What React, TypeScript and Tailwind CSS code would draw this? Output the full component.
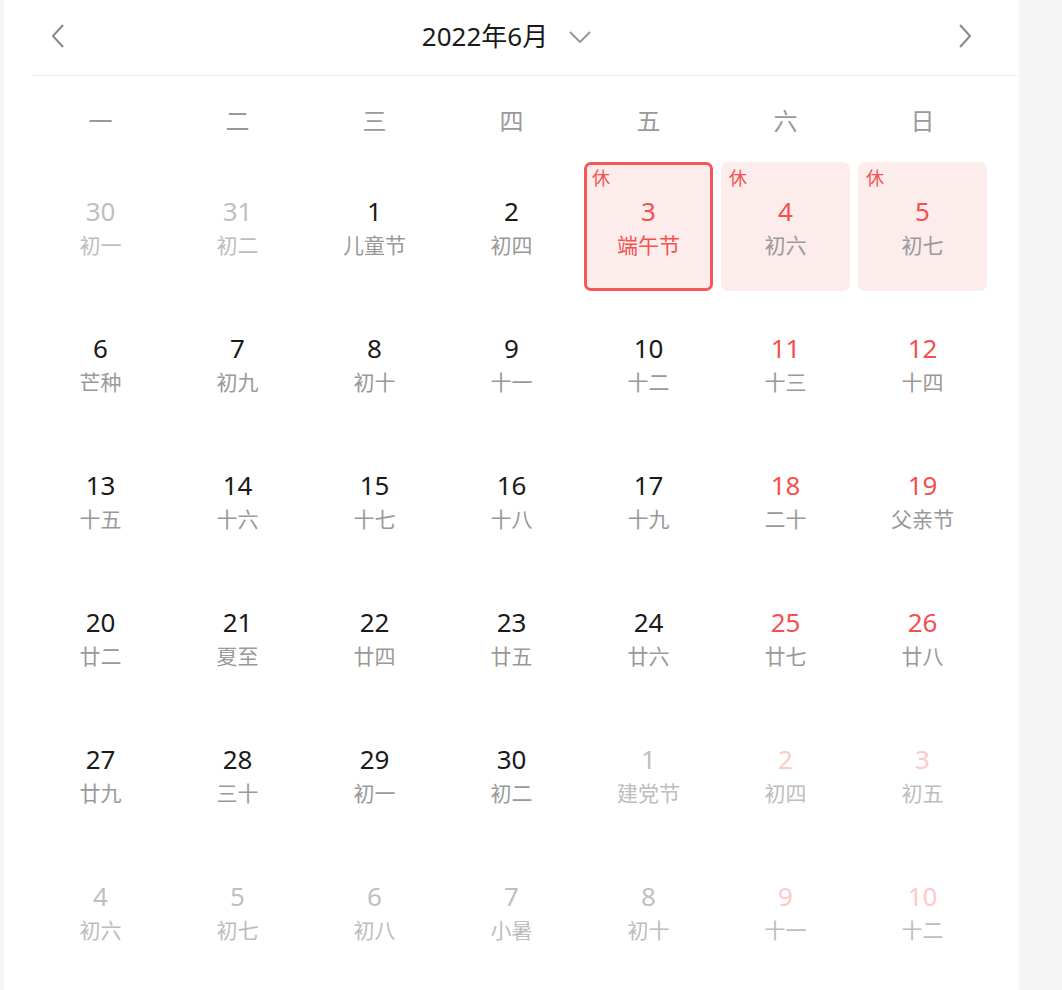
import { useState } from 'react';

type Day = {
  d: number;
  lunar: string;
  muted?: boolean;
  weekend?: boolean;
  rest?: boolean;
};

const weekdays = ['一', '二', '三', '四', '五', '六', '日'];

const days: Day[] = [
  { d: 30, lunar: '初一', muted: true },
  { d: 31, lunar: '初二', muted: true },
  { d: 1, lunar: '儿童节' },
  { d: 2, lunar: '初四' },
  { d: 3, lunar: '端午节', rest: true },
  { d: 4, lunar: '初六', weekend: true, rest: true },
  { d: 5, lunar: '初七', weekend: true, rest: true },
  { d: 6, lunar: '芒种' },
  { d: 7, lunar: '初九' },
  { d: 8, lunar: '初十' },
  { d: 9, lunar: '十一' },
  { d: 10, lunar: '十二' },
  { d: 11, lunar: '十三', weekend: true },
  { d: 12, lunar: '十四', weekend: true },
  { d: 13, lunar: '十五' },
  { d: 14, lunar: '十六' },
  { d: 15, lunar: '十七' },
  { d: 16, lunar: '十八' },
  { d: 17, lunar: '十九' },
  { d: 18, lunar: '二十', weekend: true },
  { d: 19, lunar: '父亲节', weekend: true },
  { d: 20, lunar: '廿二' },
  { d: 21, lunar: '夏至' },
  { d: 22, lunar: '廿四' },
  { d: 23, lunar: '廿五' },
  { d: 24, lunar: '廿六' },
  { d: 25, lunar: '廿七', weekend: true },
  { d: 26, lunar: '廿八', weekend: true },
  { d: 27, lunar: '廿九' },
  { d: 28, lunar: '三十' },
  { d: 29, lunar: '初一' },
  { d: 30, lunar: '初二' },
  { d: 1, lunar: '建党节', muted: true },
  { d: 2, lunar: '初四', muted: true, weekend: true },
  { d: 3, lunar: '初五', muted: true, weekend: true },
  { d: 4, lunar: '初六', muted: true },
  { d: 5, lunar: '初七', muted: true },
  { d: 6, lunar: '初八', muted: true },
  { d: 7, lunar: '小暑', muted: true },
  { d: 8, lunar: '初十', muted: true },
  { d: 9, lunar: '十一', muted: true, weekend: true },
  { d: 10, lunar: '十二', muted: true, weekend: true },
];

function numColor(day: Day) {
  if (day.muted) return day.weekend ? 'text-[#ffc9c9]' : 'text-[#bfbfbf]';
  if (day.weekend || day.rest) return 'text-[#f5504f]';
  return 'text-[#1a1a1a]';
}

export default function App() {
  const [selected, setSelected] = useState(4);

  return (
    <div className="min-h-screen bg-[#f5f5f5] font-['Noto_Sans','Noto_Sans_CJK_SC',sans-serif]">
      <div className="ml-[4px] w-[1015px] min-h-[990px] bg-white">
        {/* Header */}
        <div className="ml-[28px] h-[76px] border-b border-[#ebebeb] flex items-center justify-between pl-[19px] pr-[47px] pb-[4px]">
          <button className="text-[#8a8a8a]">
            <svg width="14" height="26" viewBox="0 0 14 26" fill="none">
              <polyline points="12,2 2,13 12,24" stroke="currentColor" strokeWidth="2" strokeLinejoin="round" />
            </svg>
          </button>
          <div className="flex items-center mr-[9px]">
            <span className="text-[26px] leading-none text-[#1a1a1a]">2022年6月</span>
            <svg className="ml-[20px] mt-[2px]" width="24" height="14" viewBox="0 0 24 14" fill="none">
              <polyline points="2,2 12,12 22,2" stroke="#9a9a9a" strokeWidth="2" strokeLinejoin="round" />
            </svg>
          </div>
          <button className="text-[#8a8a8a]">
            <svg width="14" height="26" viewBox="0 0 14 26" fill="none">
              <polyline points="2,2 12,13 2,24" stroke="currentColor" strokeWidth="2" strokeLinejoin="round" />
            </svg>
          </button>
        </div>

        {/* Weekdays */}
        <div className="ml-[32px] w-[951px] grid grid-cols-7 gap-x-[8px] mt-[7px] mb-[3px]">
          {weekdays.map(w => (
            <div key={w} className="h-[76px] flex items-center justify-center text-[24px] text-[#999999]">
              {w}
            </div>
          ))}
        </div>

        {/* Days */}
        <div className="ml-[32px] w-[951px] grid grid-cols-7 gap-[8px]">
          {days.map((day, i) => {
            const isSel = i === selected;
            return (
              <div
                key={i}
                onClick={() => setSelected(i)}
                className={`relative h-[129px] rounded-[7px] flex flex-col items-center justify-center pt-[1px] cursor-pointer ${
                  day.rest ? 'bg-[#fdecec]' : ''
                } ${isSel ? 'border-[3px] border-[#f55656]' : ''}`}
              >
                {day.rest && (
                  <span
                    className={`absolute text-[18px] leading-none text-[#f5504f] ${
                      isSel ? 'left-[5px] top-[4px]' : 'left-[8px] top-[7px]'
                    }`}
                  >
                    休
                  </span>
                )}
                <span className={`text-[26px] leading-[34px] ${numColor(day)}`}>{day.d}</span>
                <span
                  className={`mt-[2px] text-[21px] leading-[30px] ${
                    isSel ? 'text-[#f5504f]' : day.muted ? 'text-[#bdbdbd]' : 'text-[#999999]'
                  }`}
                >
                  {day.lunar}
                </span>
              </div>
            );
          })}
        </div>
      </div>
    </div>
  );
}
